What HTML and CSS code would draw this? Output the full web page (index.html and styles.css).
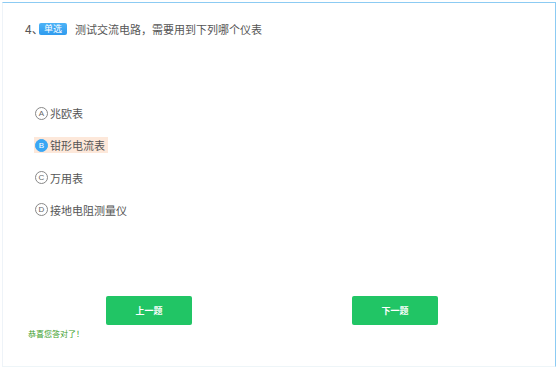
FILE: index.html
```html
<!DOCTYPE html>
<html lang="zh-CN">
<head>
    <meta charset="UTF-8">
    <meta name="viewport" content="width=device-width, initial-scale=1.0">
    <title>单选题</title>
    <link rel="stylesheet" href="styles.css">
</head>
<body>
    <div class="frame">
        <div class="question">
            <span class="num">4、</span>
            <span class="badge">单选</span>
            <span class="title">测试交流电路，需要用到下列哪个仪表</span>
        </div>

        <ul class="options">
            <li class="option"><span class="mark">A</span>兆欧表</li>
            <li class="option selected"><span class="mark">B</span>钳形电流表</li>
            <li class="option"><span class="mark">C</span>万用表</li>
            <li class="option"><span class="mark">D</span>接地电阻测量仪</li>
        </ul>

        <div class="actions">
            <button class="btn">上一题</button>
            <button class="btn">下一题</button>
        </div>

        <p class="tip">恭喜您答对了！</p>
    </div>
</body>
</html>
```

FILE: styles.css
```css
body {
    margin: 0;
    background: #fff;
    font-family: "Noto Sans CJK SC", "Noto Sans", sans-serif;
}
.frame {
    margin: 2px 0 0 2px;
    width: 552px;
    height: 363px;
    border-top: 1px solid #8ccbf3;
    border-right: 1px solid #8ccbf3;
    border-left: 1px solid #eef3f8;
    border-bottom: 1px solid #eef5f8;
}
.question {
    display: flex;
    align-items: center;
    padding: 19px 0 0 22px;
    font-size: 11px;
    color: #555;
    line-height: 14px;
}
.num {
    width: 14px;
    font-size: 12px;
}
.badge {
    background: linear-gradient(#4db3f7, #2f9bee);
    color: #fff;
    font-size: 9px;
    line-height: 12px;
    padding: 0 5px;
    border-radius: 2px;
    margin-right: 8px;
}
.options {
    list-style: none;
    margin: 0;
    padding: 69px 0 0 31px;
}
.option {
    display: flex;
    align-items: center;
    height: 16px;
    margin-bottom: 16.3px;
    font-size: 11px;
    color: #555;
    width: max-content;
    padding-right: 3px;
}
.option.selected {
    background: #fde8da;
}
.mark {
    width: 11px;
    height: 11px;
    border: 1px solid #888;
    border-radius: 50%;
    font-size: 8px;
    line-height: 11px;
    text-align: center;
    color: #666;
    margin: 0 2px 0 1px;
    font-family: "Liberation Sans", sans-serif;
}
.selected .mark {
    background: #3aa6f4;
    border-color: #3aa6f4;
    color: #fff;
}
.actions {
    display: flex;
    gap: 160px;
    padding: 62px 0 0 103px;
}
.btn {
    width: 86px;
    height: 29px;
    background: #21c565;
    border: none;
    border-radius: 2px;
    color: #fff;
    font-size: 9px;
    font-weight: bold;
    font-family: inherit;
    cursor: pointer;
}
.tip {
    margin: 3px 0 0 25px;
    font-size: 8px;
    color: #3d9e2a;
}
```
